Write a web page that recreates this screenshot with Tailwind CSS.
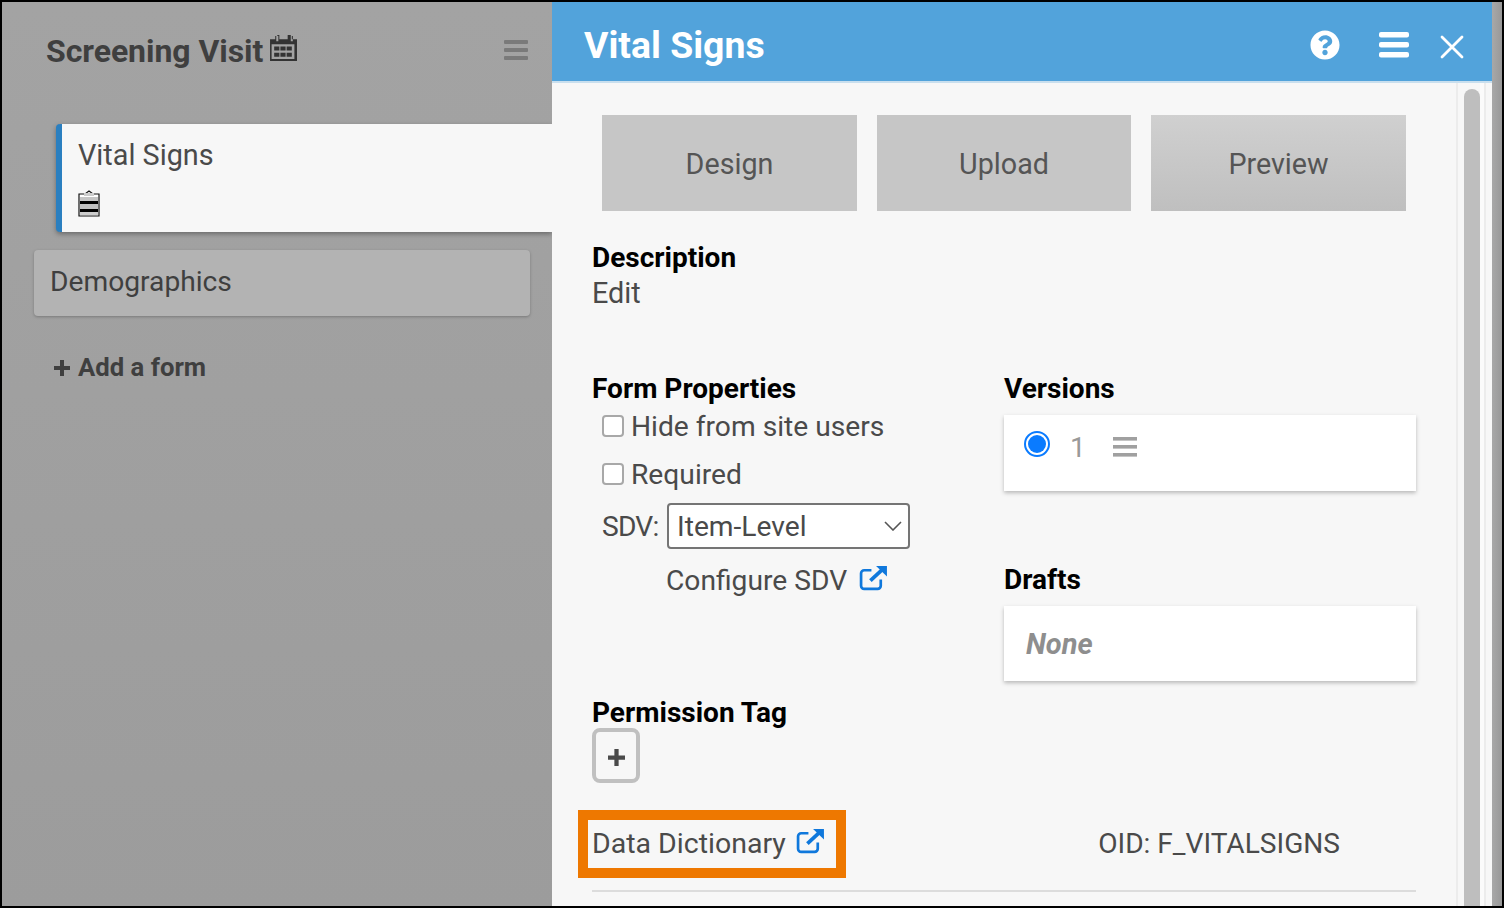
<!DOCTYPE html>
<html><head><meta charset="utf-8">
<script src="https://cdn.jsdelivr.net/npm/@tailwindcss/browser@4"></script>
</head>
<body class="m-0 bg-black">
<div class="w-[1504px] h-[908px] border-2 border-black flex overflow-hidden font-['Roboto',sans-serif] text-[#4a4a4a] bg-[#a0a0a0]">
  <aside class="w-[550px] shrink-0 bg-gradient-to-b from-[#a3a3a3] to-[#9c9c9c] text-[#3f3f3f]">
    <div class="h-[122px] pl-[44px] pr-[24px] pt-[27px] flex items-start">
      <h2 class="text-[32px] leading-[44px] font-bold tracking-[-0.05px]">Screening Visit</h2>
      <svg class="ml-[6px] mt-[5px] w-[28px] h-[28px]" viewBox="0 0 27 27" fill="#333"><path d="M1 5h5V2h1v5h2V2h-1V1h-1 0 3v4h8V1h3v6h2V2h-1 0V5h5v21H1zM2.500 10v14h22V10z"/><path d="M5 12h5v4H5zM11 12h5v4h-5zM17 12h5v4h-5zM5 18h5v4H5zM11 18h5v4h-5zM17 18h5v4h-5z"/></svg>
      <svg class="ml-auto mt-[10px] w-[24px] h-[22px]" viewBox="0 0 24 22" fill="#7a7a7a"><rect y="1" width="24" height="4" rx="1"/><rect y="9" width="24" height="4" rx="1"/><rect y="17" width="24" height="4" rx="1"/></svg>
    </div>
    <div class="ml-[54px] h-[108px] bg-[#f7f7f7] border-l-[6px] border-[#2a7fc0] rounded-l-[4px] shadow-[0_2px_5px_rgba(0,0,0,0.35)] pl-[16px] pt-[12px]">
      <div class="text-[28.800px] leading-[38px] text-[#4a4a4a]">Vital Signs</div>
      <svg class="mt-[15px] w-[22px] h-[28px]" viewBox="0 0 22 28"><path d="M1 5h6l4-3 4 3h6v22H1z" fill="#fff" stroke="#111" stroke-width="1.200"/><rect x="6" y="4" width="10" height="3" fill="#ccc"/><rect x="2" y="8" width="18" height="4" fill="#c4c4c4"/><rect x="2" y="12" width="18" height="3" fill="#000"/><rect x="2" y="15" width="18" height="5" fill="#c0c0c0"/><rect x="2" y="20" width="18" height="3" fill="#000"/><rect x="2" y="23" width="18" height="3" fill="#ccc"/></svg>
    </div>
    <div class="mt-[18px] ml-[32px] w-[496px] h-[66px] bg-[#b3b3b3] rounded-[4px] shadow-[0_1px_3px_rgba(0,0,0,0.25)] pl-[16px] pt-[13px] text-[28.200px] leading-[38px]">Demographics</div>
    <div class="mt-[32px] ml-[51px] flex items-center h-[38px] text-[25.700px] font-bold">
      <svg class="w-[16px] h-[16px] mr-[8px] ml-[1px] mt-[2px]" viewBox="0 0 16 16" fill="#3f3f3f"><path d="M6 0h4v6h6v4h-6v6H6v-6H0V6h6z"/></svg>
      <span>Add a form</span>
    </div>
  </aside>
  <main class="w-[940px] shrink-0 flex flex-col bg-[#f7f7f7]">
    <header class="h-[81px] shrink-0 bg-[#52a3db] border-b-2 border-[#c9dfee] flex items-center pl-[32px] text-white">
      <h1 class="text-[37.400px] font-bold leading-[44px] mt-[6px]">Vital Signs</h1>
      <svg class="ml-auto mt-[6px] w-[30px] h-[30px]" viewBox="0 0 512 512" fill="#fff"><path d="M504 256c0 137-111 248-248 248S8 393 8 256 119 8 256 8s248 111 248 248zM262.700 90c-54.500 0-89.300 23-116.600 63.800-3.500 5.300-2.400 12.400 2.700 16.300l34.700 26.300c5.200 3.900 12.600 3 16.700-2.100 17.900-22.700 30.100-35.800 57.300-35.800 20.400 0 45.700 13.100 45.700 32.900 0 15-12.400 22.700-32.600 34-23.600 13.200-54.800 29.700-54.800 70.900V300c0 6.600 5.400 12 12 12h56c6.600 0 12-5.400 12-12v-1.300c0-28.600 83.500-29.800 83.500-107.200 0-58.300-60.500-102.500-117.200-102.500zM256 339c-25.400 0-46 20.600-46 46 0 25.400 20.600 46 46 46s46-20.600 46-46c0-25.400-20.600-46-46-46z"/></svg>
      <svg class="ml-[39px] mt-[6px] w-[30px] h-[26px]" viewBox="0 0 30 26" fill="#fff"><rect y="0" width="30" height="5.500" rx="2"/><rect y="10" width="30" height="5.500" rx="2"/><rect y="20" width="30" height="5.500" rx="2"/></svg>
      <svg class="ml-[31px] mr-[28px] mt-[10px] w-[24px] h-[24px]" viewBox="0 0 24 24" stroke="#fff" stroke-width="2.800" stroke-linecap="round"><path d="M2 2l20 20M22 2L2 22"/></svg>
    </header>
    <div class="flex-1 flex min-h-0">
      <div class="w-[906px] shrink-0 pl-[40px] overflow-hidden border-r-2 border-[#ececec]">
        <div class="pt-[32px] pl-[10px] flex gap-[20px]">
          <button class="w-[255px] h-[96px] pt-[4px] bg-[#c6c6c6] text-[28.700px] text-[#555]">Design</button>
          <button class="w-[254px] h-[96px] pt-[4px] bg-[#c6c6c6] text-[28.700px] text-[#555]">Upload</button>
          <button class="w-[255px] h-[96px] pt-[4px] bg-gradient-to-b from-[#d0d0d0] to-[#bfbfbf] text-[28.700px] text-[#555]">Preview</button>
        </div>
        <h3 class="mt-[29px] text-[28px] leading-[36px] font-bold text-black">Description</h3>
        <div class="mt-[-1px] text-[28.800px] leading-[36px]">Edit</div>
        <div class="mt-[60px] flex h-[324px]">
          <div class="w-[412px]">
            <h3 class="text-[28px] leading-[36px] font-bold text-black">Form Properties</h3>
            <label class="flex items-center h-[48px] pl-[10px] pb-[8px] text-[28.200px]"><span class="w-[22px] h-[22px] rounded-[4px] border-2 border-[#a8a8a8] bg-white mr-[7px] mb-[3px]"></span>Hide from site users</label>
            <label class="flex items-center h-[48px] pl-[10px] pb-[8px] text-[28.200px]"><span class="w-[22px] h-[22px] rounded-[4px] border-2 border-[#a8a8a8] bg-white mr-[7px] mb-[3px]"></span>Required</label>
            <div class="flex items-center pl-[10px] h-[46px] text-[28.200px]">
              <span class="w-[65px] pt-[2px] tracking-[-0.8px]">SDV:</span>
              <div class="w-[243px] h-[46px] border-2 border-[#757575] rounded-[4px] bg-white flex items-center pl-[8px] pr-[6px] pt-[3px]">
                <span>Item-Level</span>
                <svg class="ml-auto mb-[3px] w-[18px] h-[10px]" viewBox="0 0 18 10" fill="none" stroke="#555" stroke-width="1.600"><path d="M1 1l8 8 8-8"/></svg>
              </div>
            </div>
            <div class="flex items-center ml-[74px] mt-[12px] h-[40px] text-[28.200px]">
              <span>Configure SDV</span>
              <svg class="ml-[12px] mb-[6px] w-[29px] h-[26px]" viewBox="0 0 28 25" fill="none" stroke="#0f78dc" stroke-width="2.600"><path d="M21 14v6a3 3 0 0 1-3 3H5a3 3 0 0 1-3-3V8a3 3 0 0 1 3-3h7"/><path d="M11 15L23 4" stroke-width="3.600"/><path d="M16.500 1H27v10z" fill="#0f78dc" stroke="none"/></svg>
            </div>
          </div>
          <div class="w-[412px]">
            <h3 class="text-[28px] leading-[36px] font-bold text-black">Versions</h3>
            <div class="mt-[8px] h-[76px] bg-white shadow-[0_2px_4px_rgba(0,0,0,0.25)] flex items-start pl-[20px] pt-[16px]">
              <span class="w-[26px] h-[26px] rounded-full border-2 border-[#0a7bff] bg-white flex items-center justify-center"><span class="w-[18px] h-[18px] rounded-full bg-[#0a7bff]"></span></span>
              <span class="ml-[20px] mt-[1px] text-[28px] leading-[32px] text-[#999]">1</span>
              <svg class="ml-[27px] mt-[6px] w-[24px] h-[20px]" viewBox="0 0 24 20" fill="#a0a0a0"><rect width="24" height="3.600"/><rect y="8" width="24" height="3.600"/><rect y="16" width="24" height="3.600"/></svg>
            </div>
            <h3 class="mt-[71px] text-[28px] leading-[36px] font-bold text-black">Drafts</h3>
            <div class="mt-[8px] h-[75px] bg-white shadow-[0_2px_4px_rgba(0,0,0,0.25)] flex items-center pl-[22px] pt-[2px] text-[29px] italic font-bold text-[#8e8e8e]">None</div>
          </div>
        </div>
        <h3 class="text-[28px] leading-[36px] font-bold text-black">Permission Tag</h3>
        <div class="mt-[-3px] w-[48px] h-[55px] rounded-[8px] border-[4px] border-[#c0c0c0] flex items-center justify-center pt-[3px]">
          <svg class="w-[17px] h-[17px]" viewBox="0 0 16 16" fill="#4a4a4a"><path d="M6 0h4v6h6v4h-6v6H6v-6H0V6h6z"/></svg>
        </div>
        <div class="mt-[27px] flex items-center justify-between w-[762px] ml-[-14px] h-[68px]">
          <div class="w-[268px] h-[68px] border-[10px] border-[#ee7800] flex items-center pl-[4px] text-[28.500px]">
            <span>Data Dictionary</span>
            <svg class="ml-[10px] mb-[6px] w-[29px] h-[26px]" viewBox="0 0 28 25" fill="none" stroke="#0f78dc" stroke-width="2.600"><path d="M21 14v6a3 3 0 0 1-3 3H5a3 3 0 0 1-3-3V8a3 3 0 0 1 3-3h7"/><path d="M11 15L23 4" stroke-width="3.600"/><path d="M16.500 1H27v10z" fill="#0f78dc" stroke="none"/></svg>
          </div>
          <span class="text-[28.100px]">OID: F_VITALSIGNS</span>
        </div>
        <div class="mt-[12px] w-[824px] h-[2px] bg-[#dcdcdc]"></div>
      </div>
      <div class="w-[34px] shrink-0 flex pl-[6px]">
        <div class="w-[16px] mt-[6px] rounded-t-[8px] bg-[#bebebe]"></div>
        <div class="w-[4px] bg-[#fbfbfb]"></div>
        <div class="w-[2px] bg-[#ececec]"></div>
      </div>
    </div>
  </main>
  <div class="w-[10px] bg-gradient-to-r from-[#a8a8a8] to-[#989898]"></div>
</div>
</body></html>
